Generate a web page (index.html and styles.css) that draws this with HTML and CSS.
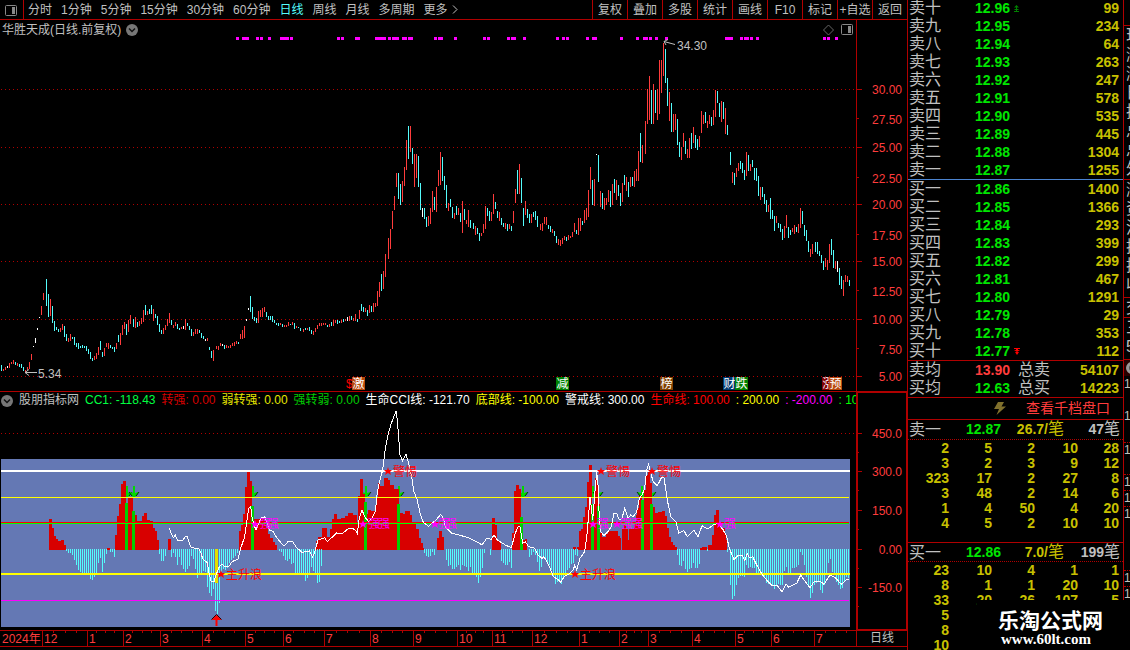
FILE: index.html
```html
<!DOCTYPE html>
<html lang="zh-CN">
<head>
<meta charset="utf-8">
<title>华胜天成 日线</title>
<link rel="stylesheet" href="styles.css">
</head>
<body>
<div class="app">
  <main class="left">
    <nav class="toolbar">
      <button class="layout-btn" aria-label="布局"><svg width="12" height="11" viewBox="0 0 12 11"><rect x=".5" y=".5" width="11" height="10" rx="1" fill="none" stroke="#888"/><rect x="7" y="2" width="3" height="7" fill="#888"/></svg></button>
      <div class="periods">
        <button>分时</button><button>1分钟</button><button>5分钟</button><button>15分钟</button><button>30分钟</button><button>60分钟</button><button class="active">日线</button><button>周线</button><button>月线</button><button>多周期</button><button>更多<svg class="more" width="6" height="9" viewBox="0 0 6 9"><path d="M1 .5 5 4.500 1 8.500" fill="none" stroke="#c0c0c0"/></svg></button>
      </div>
      <div class="tools">
        <button>复权</button><button>叠加</button><button>多股</button><button>统计</button><button>画线</button><button>F10</button><button>标记</button><button>+自选</button><button>返回</button>
      </div>
    </nav>

    <section class="pane">
      <div class="plot">
        <header class="title">
          <span>华胜天成(日线.前复权)</span>
          <svg width="12" height="12" viewBox="0 0 12 12"><circle cx="6" cy="6" r="6" fill="#777"/><path d="M3 4.500 6 7.500 9 4.500" fill="none" stroke="#111" stroke-width="1.500"/></svg>
          <svg class="corner" width="30" height="12" viewBox="0 0 30 12"><path d="M5.500 1 10.500 6 5.500 11 .5 6Z" fill="none" stroke="#666"/><rect x="18.500" y=".5" width="11" height="10" rx="1" fill="none" stroke="#888"/><rect x="25" y="2" width="3" height="7" fill="#888"/></svg>
        </header>
        <svg class="chart" id="price" viewBox="0 36 856 355"></svg>
      </div>
      <svg class="axis" id="priceAxis" viewBox="856 20 52 371"></svg>
    </section>

    <section class="pane pane-sub">
      <div class="plot">
        <header class="legend">
          <svg width="12" height="12" viewBox="0 0 12 12"><circle cx="6" cy="6" r="6" fill="#777"/><path d="M3 4.500 6 7.500 9 4.500" fill="none" stroke="#111" stroke-width="1.500"/></svg>
          <span class="c-grey">股朋指标网</span>
          <span class="c-lime">CC1: -118.43</span>
          <span class="c-red">转强: 0.00</span>
          <span class="c-gold">弱转强: 0.00</span>
          <span class="c-green">强转弱: 0.00</span>
          <span class="c-white">生命CCI线: -121.70</span>
          <span class="c-yellow">底部线: -100.00</span>
          <span class="c-white">警戒线: 300.00</span>
          <span class="c-bright">生命线: 100.00</span>
          <span class="c-yellow">: 200.00</span>
          <span class="c-magenta">: -200.00</span>
          <span class="c-neon">: 100</span>
        </header>
        <svg class="chart" id="cci" viewBox="0 409 856 221"></svg>
      </div>
      <svg class="axis" id="cciAxis" viewBox="856 392 52 238"></svg>
    </section>

    <footer class="timeline">
      <svg class="chart" id="months" viewBox="0 630 856 16"></svg>
      <span class="period-name">日线</span>
    </footer>
    <div class="crumbs"></div>
  </main>

  <aside class="book">
    <table class="levels sell" id="sell"></table>
    <table class="levels buy" id="buy"></table>
    <table class="levels sums">
      <tr><th>卖均</th><td class="price up">13.90</td><td class="side">总卖</td><td class="vol">54107</td></tr>
      <tr><th>买均</th><td class="price">12.63</td><td class="side">总买</td><td class="vol">14223</td></tr>
    </table>
    <a class="deep" href="#"><svg width="12" height="13" viewBox="0 0 12 13"><path d="M4 0H10L7.500 4.500H12L2.500 13 5 7H0Z" fill="#80702c"/></svg><span>查看千档盘口</span></a>
    <div class="queue-head"><b class="name">卖一</b><b class="now">12.87</b><b class="avg">26.7/<i>笔</i></b><b class="cnt">47<i>笔</i></b></div>
    <table class="queue queue-sell" id="q1"></table>
    <div class="queue-head"><b class="name">买一</b><b class="now">12.86</b><b class="avg">7.0/<i>笔</i></b><b class="cnt">199<i>笔</i></b></div>
    <table class="queue" id="q2"></table>
  </aside>

  <aside class="strip">
    <div class="s-group g1"><span>现</span><span>涨</span><span>涨</span><span>日</span><span>振</span><span>总</span><span>总</span><span>外</span></div>
    <div class="s-group g2"><span>涨</span><span>资</span><span>流</span><span>换</span><span>换</span><span>收</span></div>
    <div class="s-group g3"><span>交</span></div>
    <div class="s-group g4"><span>三</span><span>5</span></div>
    <div class="s-group g5"><i></i></div>
    <div class="s-ticks"><span class="h32">1</span><span class="h34">1</span><span class="h32 dot">1</span><span class="h16 dot">1</span><span class="h16 dot">1</span><span class="h16 dot">1</span><span class="h48"></span><span class="h16 dot">1</span><span class="h16 dot">1</span></div>
  </aside>

  <div class="brand"><strong>乐淘公式网</strong><span>www.60lt.com</span></div>
</div>
<script src="chart.js"></script>
</body>
</html>
```
FILE: styles.css
```css
* { box-sizing: border-box; }
body {
  margin: 0;
  background: #000;
  color: #c0c0c0;
  font: 12px/15px "Liberation Sans", "Noto Sans CJK SC", sans-serif;
}
button {
  border: 0;
  padding: 1px 0 0;
  background: none;
  color: inherit;
  font: inherit;
  white-space: nowrap;
}
svg { display: block; flex: none; }
table { border-collapse: collapse; table-layout: fixed; width: 100%; }
th, td { padding: 0; font-weight: normal; text-align: left; }

.app {
  position: relative;
  display: grid;
  grid-template-columns: minmax(0, 1fr) 216px 6px;
  height: 100vh;
  overflow: hidden;
}
.left { min-width: 0; }

.toolbar {
  display: flex;
  height: 20px;
  border-bottom: 1px solid #b00000;
  border-right: 1px solid #b00000;
}
.layout-btn { width: 24px; padding-left: 5px; border-right: 1px solid #b00000; }
.periods { display: flex; gap: 9px; padding-left: 4px; }
.periods .active { color: #54fcfc; }
.more { display: inline-block; margin-left: 4px; }
.tools { display: flex; margin-left: auto; }
.tools button { width: 35px; border-left: 1px solid #b00000; }

.pane {
  display: grid;
  grid-template-columns: minmax(0, 1fr) 52px;
  border-bottom: 1px solid #b00000;
}
.pane-sub { border-bottom: 0; }
.plot { min-width: 0; }
.chart, .axis { width: 100%; height: auto; }
svg text { font-family: "Liberation Sans", "Noto Sans CJK SC", sans-serif; font-size: 12px; }
.title {
  display: flex;
  align-items: center;
  gap: 5px;
  height: 16px;
  padding: 4px 3px 0 2px;
}
.corner { margin-left: auto; }
.legend {
  display: flex;
  align-items: center;
  gap: 6px;
  height: 17px;
  padding-left: 1px;
  overflow: hidden;
  white-space: nowrap;
}
.c-grey { color: #c0c0c0; }
.c-lime { color: #00ff40; }
.c-red { color: #d80000; }
.c-gold { color: #e6e600; }
.c-green { color: #00cc00; }
.c-white { color: #fff; }
.c-yellow { color: #ff0; }
.c-bright { color: #f00; }
.c-magenta { color: #f0f; }
.c-neon { color: #0f0; }

.timeline {
  display: grid;
  grid-template-columns: minmax(0, 1fr) 52px;
  border-bottom: 1px solid #b00000;
}
.period-name {
  border: solid #b00000;
  border-width: 1px 1px 0;
  text-align: center;
}
.crumbs { border-right: 1px solid #b00000; height: 8px; }

.book {
  border-right: 1px solid #b00000;
  color: #c8c000;
  font-size: 14px;
  overflow: hidden;
}
.levels { line-height: 18px; font-weight: bold; }
.levels tr { height: 18px; }
.levels th { width: 67px; padding-left: 1px; color: #c0c0c0; font-size: 16px; font-weight: normal; }
.levels td { font-weight: bold; }
.levels .price { width: 43px; color: #00e600; }
.levels .up { color: #ff3c3c; }
.levels .side { width: 40px; color: #c0c0c0; font-size: 16px; font-weight: normal; }
.levels .vol { padding-right: 4px; text-align: right; }
.side svg { margin-left: -4px; }
.sell { margin-top: -1px; }
.buy { border-top: 1px solid #4c84d0; border-image: linear-gradient(90deg, #d89850 54%, #4c84d0 54%) 1; }
.sums { border-top: 1px solid #b00000; }
.deep {
  display: flex;
  justify-content: flex-end;
  align-items: center;
  gap: 20px;
  height: 23px;
  padding-right: 13px;
  border: solid #b00000;
  border-width: 1px 0;
  color: #ff3c3c;
  text-decoration: none;
}
.queue-head {
  display: grid;
  grid-template-columns: 54px 38px 63px 1fr;
  height: 20px;
  padding: 0 3px 0 1px;
  border-bottom: 1px dotted #b00000;
  line-height: 19px;
}
.queue-head b { text-align: right; }
.queue-head i { font-size: 16px; font-style: normal; font-weight: normal; line-height: 16px; }
.queue-head .name { color: #c0c0c0; font-size: 16px; font-weight: normal; text-align: left; }
.queue-head .now { color: #00e600; }
.queue-head .cnt { color: #c0c0c0; }
.queue { margin-top: 1px; line-height: 15px; }
.queue-sell { margin-bottom: 11px; }
.queue-sell + .queue-head { border-top: 1px solid #b00000; }
.queue td { font-weight: bold; text-align: right; padding-right: 2px; }
.queue td:last-child { padding-right: 4px; }

.strip {
  padding-top: 25px;
  overflow: hidden;
  font-size: 16px;
}
.s-group { border-top: 1px solid #b00000; padding-left: 2px; overflow: hidden; }
.s-group span { display: block; width: 16px; line-height: 19px; }
.g1 { height: 154px; }
.g2 { height: 118px; }
.g3 { height: 20px; }
.g4 { height: 42px; }
.g5 { height: 17px; background: #280000; }
.g5 i { display: block; width: 12px; height: 12px; margin-top: 2px; border: 3px solid #999; border-radius: 50%; background: #555; }
.s-ticks { font-size: 12px; }
.s-ticks span { display: block; padding: 1px 0 0; }
.s-ticks .dot { border-top: 1px dotted #b00000; padding: 0; }
.h16 { height: 16px; }
.h32 { height: 32px; }
.h34 { height: 34px; }
.h48 { height: 48px; }

.brand {
  position: absolute;
  right: 0;
  bottom: 0;
  width: 153px;
  height: 50px;
  padding: 7px 0 0 21px;
  background: #000;
  color: #fff;
}
.brand strong { display: block; font: bold 21px/24px "Noto Sans CJK SC", sans-serif; white-space: nowrap; }
.brand span { display: block; padding-left: 3px; font: bold 15px/16px "Liberation Serif", serif; }
```
FILE: chart.js
```js
const NS = 'http://www.w3.org/2000/svg';
const $ = id => document.getElementById(id);

function add(parent, tag, attrs, text) {
  const el = document.createElementNS(NS, tag);
  for (const k in attrs) el.setAttribute(k, attrs[k]);
  if (text !== undefined) el.textContent = text;
  parent.appendChild(el);
  return el;
}
function box(p, x, y, w, h, fill) {
  return add(p, 'rect', { x, y, width: w, height: h, fill, 'shape-rendering': 'crispEdges' });
}
function label(p, x, y, text, fill, anchor) {
  return add(p, 'text', { x, y, fill, 'text-anchor': anchor || 'start' }, text);
}
function dotted(p, y, x2) {
  add(p, 'line', { x1: 1, x2, y1: y + 0.5, y2: y + 0.5, stroke: '#b00000', 'stroke-dasharray': '1 3', 'shape-rendering': 'crispEdges' });
}
const RED = '#ff3c3c', LINE = '#b00000';

/* Price bars: a start column, then one "colour high-low" token for each two pixels */
const bars = [
  [1, 'c365-371 r369-371 r367-370 w366-368 r363-368 r362-364 r360-364 c362-365 r363-366 c364-367 c364-368 c367-371 r370-372 r367-370 r362-369 r354-360 w346-347 w338-343 w328-330 w317-318 r306-315 r293-300'],
  [46, 'c279-306 c294-317 r299-316 c306-323 c321-331 c327-330 c329-332 r328-332 r324-330 c326-337 c334-341 r338-342 r334-341 c337-339 c337-345 c343-347 c343-349 c346-348 c345-348 c346-348 c346-351 c349-354 c352-359 c358-361 r356-360 r353-359 r347-355 c341-350 c352-357 r348-356 r343-347 r343-349 c345-348 c347-349 c347-352 r343-349 c335-342 r333-345 r325-335 r322-329 c324-335 r320-332 r315-324'],
  [133, 'c319-327 r317-328 c322-327 r321-326 r318-324 r310-322 c305-315 r311-315 c309-314 c305-314 r309-321 c314-318 c316-325 c324-332 c330-334 r328-334 r325-330 r319-326 r313-323 c320-325 r325-328 r322-326 c324-329 c328-330 r327-329 w326-329 r319-330 c323-326 c326-330 c329-336 r332-336 r329-334 r329-334 c330-333 c333-338 c336-339 w339-341 r338-341 c347-350 c351-358 r350-361'],
  [216, 'r346-349 r346-350 r343-346 w344-346 c345-349 r345-348 r346-348 r345-348 r343-346 r342-346 r341-344 c342-344 r334-339 r330-339 r326-338 w319-321 w308-310 c296-312 c307-319 c317-321 c318-323 r311-323 r310-317 r308-317 r307-312 c312-317 c316-320 c316-320 c316-322 c320-323 c323-325 c323-326 r323-325 c324-327 r325-327 r325-327 r322-326 c324-325 r322-325 c323-329 r326-328 c327-328 c328-331'],
  [303, 'r329-332 c328-330 r328-330 c327-331 c330-334 r331-335 r328-332 r325-329 r323-326 r323-326 r323-325 r323-325 c325-327 r324-327 c322-326 r320-326 r320-323 c320-324 c321-323 r320-323 c319-322 r319-321 w317-321 r316-321 c316-320 r318-321 r314-321 c319-322 r310-319 c304-311 c307-312 r308-312 c310-316 r305-313 c306-312 r303-312 r303-307 r291-306 r282-297 c274-291 r271-289 r254-277'],
  [388, 'r238-259 r229-249 r211-229 r196-210 r173-187 c173-199 c184-205 r181-202 r167-186 r140-170 c126-159 r126-152 c148-164 r154-187 r154-178 c156-187 c183-210 w208-217 c208-219 c217-227 r216-226 r208-224 r191-212 c197-210 r187-212 r170-186 r152-185 c157-181 c176-190 c185-208 r203-211 c199-207 c207-218 r213-219 c206-215 r208-215 c213-222 r201-233 c209-220 r220-224 r210-227 c220-228'],
  [473, 'c223-229 r226-235 c228-234 c233-241 r233-236 r224-233 r206-229 c208-216 c211-221 r212-221 r194-214 c202-209 c211-218 r212-221 c218-225 c223-227 r223-229 c224-231 r224-229 c226-231 r211-223 r189-203 c170-194 r164-194 c178-203 c208-226 r201-215 c209-218 c214-223 r214-223 c212-217 c211-220 c216-227'],
  [540, 'r224-230 r223-231 r217-224 r217-225 c225-229 c226-232 r229-233 c231-236 c236-243 r239-245 r240-246 r238-244 r236-240 c237-241 r235-240 r236-238 r232-237 r223-232 c230-234 r218-235 r218-231 c221-225 r210-223 r208-220 r190-217 r167-189 c180-205 r179-206 w154-155 c155-182 r191-207 c193-209 r198-210 r198-205 r190-202 c191-207 r184-205 c179-193 r180-200 c185-196 c193-206 r183-202 c175-185 r177-191 c182-197 r177-187 c177-186 r171-187 r169-181 r151-181 c133-162 r145-163'],
  [645, 'r121-154 r89-124 r76-120 c90-124 r84-124 c90-113 r89-120 r60-114 r60-93 r43-76 c49-83 c78-106 r92-121 c103-132 r114-132 r114-130 c119-145 c142-157 r147-160 r133-147 c141-154 r149-158 r138-158 c133-149 r127-143 c135-148 c139-150 r136-147 r111-133 r115-124 c112-123 r121-128 r115-124 c117-126 r110-125 r90-117 c91-103 c103-117 r101-122 c102-119 r108-134 c125-135'],
  [730, 'c152-165 r172-183 c173-185 r168-177 r163-171 c161-169 c163-173 c170-180 r152-176 c155-171 r164-171 c160-167 c168-180 c168-181 c176-196 r187-200 c187-197 c194-204 c200-212 r205-212 c198-219 c210-219 c216-231 r216-223 c223-228 c224-232 c229-240 r226-238 r215-228 c227-238 c230-235 r228-232 r225-234 c227-232 r224-233 r208-228 c211-224 c225-236 c230-241 c241-252 r249-257 r244-254'],
  [815, 'c242-252 c242-254 c251-256 c255-263 c261-270 r258-267 r260-270 r244-263 c239-255 c250-268 r261-269 w261-272 c268-285 c276-289 r280-296 r275-282 r276-282 c280-286']
];
const tone = { r: RED, c: '#54fcfc', w: '#fff' };

const price = $('price');
[89, 147, 204, 261, 319, 376].forEach(y => dotted(price, y, 856));
bars.forEach(([x0, list]) => list.split(' ').forEach((t, i) => {
  const [hi, lo] = t.slice(1).split('-').map(Number);
  box(price, x0 + i * 2, hi, 1, lo - hi, tone[t[0]]);
}));
const signals = [236,3,242,7,256,3,260,3,268,3,280,9,290,3,337,3,341,3,355,5,375,11,388,3,392,7,402,5,408,5,434,3,438,5,454,3,483,3,487,3,507,3,511,5,523,3,556,3,562,3,566,3,586,3,592,5,620,3,636,3,643,5,649,3,655,3,665,3,725,8,740,3,744,5,750,3,756,3,823,3,827,3,835,3];
for (let i = 0; i < signals.length; i += 2) box(price, signals[i], 37, signals[i + 1], 3, '#f0f');
add(price, 'path', { d: 'M675 44.500 664 41.500M668 39.500 664 41.500 666 45', fill: 'none', stroke: '#c0c0c0' });
label(price, 677, 50, '34.30', '#c0c0c0');
add(price, 'path', { d: 'M37 372.500H25M29 369.500 25 372.500 29 375.500', fill: 'none', stroke: '#c0c0c0' });
label(price, 38, 378, '5.34', '#c0c0c0');

function tag(x, text, fill) {
  box(price, x, 377, 13, 13, fill);
  label(price, x + 6.5, 388, text, '#fff', 'middle');
}
label(price, 346, 388, '$', '#f00');
tag(352, '激', '#b8480c');
tag(556, '减', '#008000');
tag(660, '榜', '#804000');
tag(723, '财', '#003870');
tag(735, '跌', '#008000');
tag(822, '涨', '#800000');
tag(829, '预', '#b8480c');

const pa = $('priceAxis');
box(pa, 856, 20, 1, 371, LINE);
box(pa, 907, 20, 1, 371, LINE);
[[89, '30.00'], [119, '27.50'], [147, '25.00'], [178, '22.50'], [204, '20.00'], [235, '17.50'], [261, '15.00'], [291, '12.50'], [319, '10.00'], [349, '7.50'], [376, '5.00']].forEach(([y, t], i) => {
  box(pa, 857, i % 2 ? y - 1 : y, i % 2 ? 2 : 5, 1, LINE);
  label(pa, 902, y + 5, t, RED, 'end');
});

/* CCI pane */
const cci = $('cci');
dotted(cci, 433, 856);
box(cci, 1, 459, 849, 168, '#6478b4');

[127, 134, 253, 366, 399, 523, 593, 598, 642, 651].forEach(x => {
  add(cci, 'path', { d: `M${x - 1} 486h2v7l3-1v2l-4 4-4-4v-2l3 1z`, fill: '#00dc00' });
  add(cci, 'path', { d: `M${x - 5} 492l3 4M${x + 5} 492l-3 4`, stroke: '#003000' });
});

/* Histogram above zero: pairs of column start and top, 549 ends a group */
const red = [
  [49,519,52,528,54,536,56,539,58,541,61,540,64,545,66,549],
  [107,548,110,549],
  [115,535,117,516,119,504,121,484,123,481,126,503,128,497,133,511,135,515,137,521,140,521,142,516,144,513,147,520,150,521,153,528,155,531,157,540,159,549],
  [168,539,171,549],
  [239,531,241,525,243,514,245,487,247,472,250,481,252,506,254,519,264,521,266,528,268,534,270,538,273,542,275,545,277,549],
  [316,541,318,537,322,528,327,537,330,529,332,519,334,514,337,519,341,518,345,516,348,513,353,515,357,522,358,496,360,479,363,494,365,502,367,514,368,510,371,511,376,498,378,483,380,486,384,478,388,480,390,485,394,489,399,504,400,513,403,514,405,511,410,515,412,524,416,529,419,538,421,543,423,548,424,549],
  [437,538,439,531,442,537,444,549],
  [492,518,495,525,497,540,499,542,501,549],
  [512,533,514,491,516,485,519,489,521,517,523,540,525,539,527,549],
  [573,547,576,549,577,547,579,531,581,529,583,517,585,507,587,482,589,465,592,504,595,478,598,504,600,533,602,537,606,534,608,531,618,536,620,538,621,549,622,529,624,525,626,529,628,540,629,529,634,523,636,515,637,508,639,496,642,500,644,490,646,475,648,470,650,483,652,504,653,507,655,513,658,512,662,511,665,516,667,528,669,537,671,542,673,545,675,547,677,549],
  [700,548,702,547,707,549],
  [708,545,712,535,714,515,716,510,719,524,720,528,725,533,726,540,727,549]
];
red.forEach(g => {
  for (let i = 0; i + 2 < g.length; i += 2)
    if (g[i + 1] < 549) box(cci, g[i], g[i + 1], g[i + 2] - g[i], 550 - g[i + 1], '#d80000');
});
[[125,503],[132,511],[251,506],[364,502],[397,504],[520,517],[591,504],[597,506],[641,500],[650,504]].forEach(([x, y]) => box(cci, x, y, 3, 550 - y, '#00cc00'));

/* Histogram below zero: start column, then a bottom for each two pixels */
const cyan = [
  [66,551,553,553,555,560,565,570,572,573,574,575,575,579,580,577,573,563,558,572,563,554],
  [110,552,552,557],[159,554,561,561,556],
  [171,557,553,557,565,557,565,569,572,569,566,556,559,569,578,573,573,571,572,587,593,596,589,611,614,603],
  [219,577,572,569,570,568,563,560,558,556,553],
  [279,551,552,556,560,561,559,564,563,573,573,573,573,573,581,578,574,567,571,573,583,582,566],
  [424,553,556,557,556,552,555],[434,551],
  [446,560,566,565,569,569,567,565,570,565,566,567,571,567,573,575,577,583,577,568,553],
  [490,555],[501,561,563,565,565,562,568],
  [529,557,555,552,555,562,571,567,558,560,563,565,570,576,584,582,581,584,577,573,570,568,564,563,555,556],
  [677,555,565,566,561,569,572,569,568,563,568,568,564],[707,551],[727,552],
  [730,585,599,596,585,578,576,576,577,565,568,567,568,568,573,573,574,575,578,583,584,585,586,589,585,584,585,585,571,567,573,574,568,568,567,565,552,555,565,577,585,598,593,585,583,582,590,593,585,573,563,559,572,575,582,585,589,588,582,577,578]
];
cyan.forEach(([x0, ...v]) => v.forEach((b, i) => box(cci, x0 + i * 2, 549, 1, b - 549, '#54fcfc')));
box(cci, 215, 549, 3, 34, '#e0e000');

box(cci, 1, 470, 849, 2, '#fff');
box(cci, 1, 497, 848, 1, '#ff0');
box(cci, 1, 522, 848, 1, '#f00');
box(cci, 1, 523, 848, 1, '#0f0');
box(cci, 1, 573, 849, 2, '#ff0');
box(cci, 1, 600, 848, 1, '#f0f');

/* CCI curve, in thirds of a pixel from the start of each stretch */
const curve = [
  [0, [508,430,514,445,520,458,526,450,532,465,548,466,556,455,562,455,568,475,574,488,596,491,602,500,608,522,622,533,628,570,634,590,642,590,648,570,658,545,666,538,674,545,686,545,696,530,714,522,722,490,734,455,740,410,746,370,752,364,756,395,762,420,768,435,776,415,784,398,794,395,800,410,808,435,820,440,830,458,852,484,864,470,878,470]],
  [290, [8,470,20,488,36,502,58,498,68,517,74,500,84,465,104,458,112,470,140,444,156,446,176,430,188,430,198,438,202,445,208,400,216,375,224,395,236,410,246,398,256,380,262,320,270,285,278,255,286,190,294,150,304,115,318,78,322,105,330,210,338,228,348,208,356,235,364,270,372,320,382,345,390,385,400,412,416,424,426,415,438,405,452,388,460,400,466,425,486,445,506,450,536,458,560,470,576,480,590,460,604,463,612,450,622,465,646,480,664,488,676,445,684,425,690,425,698,475,706,470,716,485,734,490,744,510,756,520,762,515,776,540,790,575,802,582,812,592,822,575,840,565,850,555,854,540,860,555,870,520,884,500,892,440,900,335,908,405,914,330,920,260,924,300,928,400,932,440]],
  [590, [42,452,54,440,64,425,72,385,80,385,88,405,96,400,104,370,114,400,122,390,130,395,140,380,148,340,156,330,164,310,170,255,176,238,182,265,190,290,202,302,216,275,222,278,232,345,242,395,258,410,266,445,282,437,292,455,302,445,312,435,324,455,336,422,354,432,370,420,384,415,400,435,410,455,418,490,432,524,446,510,456,510,464,526,472,505,478,518,488,515,500,540,516,568,530,585,544,600,562,602,576,620,588,597,596,607,620,595,632,570,646,590,660,608,672,590,690,588,702,598,720,570,736,578,754,598,768,585,778,583]]
];
const pts = [];
curve.forEach(([x0, v]) => {
  for (let i = 0; i < v.length; i += 2) pts.push((x0 + v[i] / 3).toFixed(1) + ',' + (385 + v[i + 1] / 3).toFixed(1));
});
add(cci, 'polyline', { points: pts.join(' '), fill: 'none', stroke: '#fff', 'shape-rendering': 'crispEdges' });

function star(x, y, fill) {
  add(cci, 'path', { d: `M${x} ${y - 4}l1 3h3l-2 2 1 3-3-2-3 2 1-3-2-2h3z`, fill });
}
[[388, 471, '警惕'], [601, 471, '警惕'], [652, 471, '警惕'], [221, 574, '主升浪'], [575, 574, '主升浪']].forEach(([x, y, t]) => {
  star(x, y, '#f00');
  label(cci, x + 5, y + 5, t, '#f00');
});
[[255, 259, 267], [363, 368, 378], [435, 438, 445], [593, 597], [617, 620, 631], [720, 724]].forEach(([x, ...at]) => {
  star(x, 524, '#f0f');
  at.forEach(a => label(cci, a, 528, '强', '#f0f'));
});
add(cci, 'path', { d: 'M216.500 615l5 5h-4v6h-2v-6h-4z', fill: '#f00' });
add(cci, 'path', { d: 'M211.500 619.500l5-5 5 5', fill: 'none', stroke: '#200000' });

const ca = $('cciAxis');
add(ca, 'rect', { x: 857, y: 392, width: 50, height: 238, fill: 'none', stroke: LINE, 'stroke-width': 2, 'shape-rendering': 'crispEdges' });
[[433, '450.0'], [471, '300.0'], [510, '150.0'], [549, '0.00'], [587, '-150.0']].forEach(([y, t]) => {
  box(ca, 858, y, 4, 1, LINE);
  box(ca, 858, y + 19, 1, 1, LINE);
  label(ca, 902, y + 5, t, RED, 'end');
});

const months = $('months');
box(months, 0, 630, 856, 1, LINE);
label(months, 2, 643, '2024年', RED);
[[42,'12'],[87,'1'],[123,'2'],[160,'3'],[202,'4'],[245,'5'],[283,'6'],[324,'7'],[370,'8'],[413,'9'],[457,'10'],[492,'11'],[532,'12'],[579,'1'],[619,'2'],[648,'3'],[692,'4'],[735,'5'],[771,'6'],[814,'7']].forEach(([x, t], i, all) => {
  const next = all[i + 1] ? all[i + 1][0] : 856;
  box(months, x, 631, 1, 15, LINE);
  for (let k = 1; k < 4; k++) box(months, Math.round(x + (next - x) * k / 4), 631, 1, 2, LINE);
  label(months, x + 2, 643, t, RED);
});

/* Order book */
const up = '<svg width="5" height="7" viewBox="0 0 5 7"><path d="M2.500 0 5 2.500H0ZM2 2h1v4H2ZM.5 4h4v1h-4ZM0 6h5v1H0Z" fill="#008000"/></svg>';
const down = '<svg width="6" height="7" viewBox="0 0 6 7"><path d="M0 0h6v1H4v1h2L3 4 0 2h2V1H0ZM1 4h4L3 7Z" fill="#f00"/></svg>';
function levels(id, side, names, top, vols, mark) {
  $(id).innerHTML = vols.map((v, i) =>
    `<tr><th>${side}${names[i]}</th><td class="price">${((top - i) / 100).toFixed(2)}</td><td class="side">${mark[i] || ''}</td><td class="vol">${v}</td></tr>`).join('');
}
levels('sell', '卖', '十九八七六五四三二一', 1296, [99, 234, 64, 263, 247, 578, 535, 445, 1304, 1255], { 0: up });
levels('buy', '买', '一二三四五六七八九十', 1286, [1400, 1366, 293, 399, 299, 467, 1291, 29, 353, 112], { 9: down });
function queue(id, rows) {
  $(id).innerHTML = rows.map(r => '<tr>' + r.map(v => `<td>${v}</td>`).join('') + '</tr>').join('');
}
queue('q1', [[2,5,2,10,28],[3,2,3,9,12],[323,17,2,27,8],[3,48,2,14,6],[1,4,50,4,20],[4,5,2,10,10]]);
queue('q2', [[23,10,4,1,1],[8,1,1,20,10],[33,20,26,107,5],[5,'','','',''],[8,'','','',''],[10,'','','','']]);
```
